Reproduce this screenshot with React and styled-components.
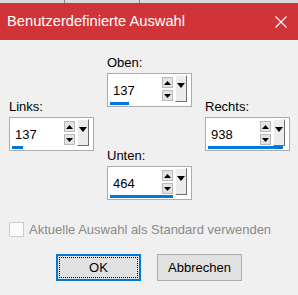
import styled, { createGlobalStyle } from "styled-components"

const GlobalStyle = createGlobalStyle`
  html, body {
    margin: 0;
    padding: 0;
    background: #f0f0f0;
  }
  body {
    font-family: 'Liberation Sans', Arial, sans-serif;
    font-size: 13px;
    color: #000;
  }
`

const Window = styled.div`
  width: 298px;
  height: 295px;
  background: #f0f0f0;
  display: flex;
  flex-direction: column;
  overflow: hidden;
`

const TopStrip = styled.div`
  height: 3px;
  background: #dadada;
  display: flex;
`

const StripTick = styled.span`
  width: 1px;
  background: #8a8a8a;
  margin-left: ${props => props.$gap}px;
`

const TitleBar = styled.div`
  height: 37px;
  background: #d13438;
  color: #fff;
  display: flex;
  align-items: center;
  justify-content: space-between;
  padding: 0 11px 0 7px;
`

const Title = styled.span`
  font-size: 14.7px;
  line-height: 17px;
`

const Fields = styled.div`
  display: grid;
  grid-template-columns: repeat(3, 85px);
  column-gap: 13px;
  padding: 15px 0 0 9px;
`

const Column = styled.div`
  display: flex;
  flex-direction: column;
  gap: 41px;
  padding-top: ${props => props.$offset}px;
`

const Field = styled.div`
  display: flex;
  flex-direction: column;
  gap: 3px;
`

const Label = styled.label`
  line-height: 15px;
  height: 15px;
`

const SpinBox = styled.div`
  box-sizing: border-box;
  width: 85px;
  height: 34px;
  background: #fff;
  border: 1px solid #ababab;
  padding: 1px 4px 1px 1px;
  display: flex;
  flex-direction: column;
`

const SpinRow = styled.div`
  height: 27px;
  display: flex;
`

const Value = styled.span`
  flex: 1;
  padding-left: 4px;
  margin-top: 8px;
  line-height: 15px;
  height: 15px;
`

const Stepper = styled.div`
  display: flex;
  flex-direction: column;
  gap: 2px;
  margin-top: 2px;
`

const StepButton = styled.div`
  box-sizing: border-box;
  width: 11px;
  height: 11px;
  background: #e3e3e3;
  border: 1px solid #b9b9b9;
  display: flex;
  align-items: center;
  justify-content: center;
`

const DropButton = styled.div`
  box-sizing: border-box;
  width: 12px;
  height: 27px;
  margin-left: 2px;
  background: #ececec;
  border-top: 1px solid #fdfdfd;
  border-left: 1px solid #fdfdfd;
  border-right: 1px solid #6e6e6e;
  border-bottom: 1px solid #6e6e6e;
  display: flex;
  justify-content: center;
  padding-top: 7px;
`

const Track = styled.div`
  height: 3px;
  padding-left: 1px;
  display: flex;
`

const Bar = styled.div`
  height: 3px;
  background: #0078d7;
`

const CheckRow = styled.div`
  display: flex;
  align-items: center;
  gap: 5px;
  margin-top: 22px;
  padding-left: 9px;
  color: #8a8a8a;
  line-height: 15px;
`

const CheckBox = styled.span`
  box-sizing: border-box;
  width: 15px;
  height: 15px;
  border: 1px solid #cccccc;
  background: #fbfbfb;
`

const ButtonRow = styled.div`
  display: flex;
  justify-content: center;
  gap: 16px;
  margin-top: 17px;
`

const Button = styled.button`
  box-sizing: border-box;
  width: 85px;
  height: 27px;
  padding: 0;
  font-family: 'Liberation Sans', Arial, sans-serif;
  font-size: 13px;
  color: #000;
  background: #e1e1e1;
  border: ${props => (props.$default ? "2px solid #0078d7" : "1px solid #adadad")};
  outline: ${props => (props.$default ? "1px dotted #000" : "none")};
  outline-offset: -4px;
`

const CloseIcon = () => (
  <svg width="12" height="12" viewBox="0 0 12 12">
    <path d="M0.5 0.5 L11.5 11.5 M11.5 0.5 L0.5 11.5" stroke="#fff" strokeWidth="1.1" />
  </svg>
)

const UpArrow = () => (
  <svg width="7" height="4" viewBox="0 0 7 4">
    <path d="M3.5 0 L7 4 L0 4 Z" fill="#000" />
  </svg>
)

const DownArrow = ({ w = 7, h = 4 }) => (
  <svg width={w} height={h} viewBox={`0 0 ${w} ${h}`}>
    <path d={`M0 0 L${w} 0 L${w / 2} ${h} Z`} fill="#000" />
  </svg>
)

const fields = {
  oben: { label: "Oben:", value: 137, max: 590 },
  links: { label: "Links:", value: 137, max: 1000 },
  rechts: { label: "Rechts:", value: 938, max: 1000 },
  unten: { label: "Unten:", value: 464, max: 590 },
}

const Spin = ({ label, value, max }) => (
  <Field>
    <Label>{label}</Label>
    <SpinBox>
      <SpinRow>
        <Value>{value}</Value>
        <Stepper>
          <StepButton><UpArrow /></StepButton>
          <StepButton><DownArrow /></StepButton>
        </Stepper>
        <DropButton><DownArrow w={8} h={5} /></DropButton>
      </SpinRow>
      <Track>
        <Bar style={{ width: `${Math.round((value / max) * 80)}px` }} />
      </Track>
    </SpinBox>
  </Field>
)

const App = () => {
  return (
    <Window>
      <GlobalStyle />
      <TopStrip>
        <StripTick $gap={64} />
        <StripTick $gap={74} />
      </TopStrip>
      <TitleBar>
        <Title>Benutzerdefinierte Auswahl</Title>
        <CloseIcon />
      </TitleBar>
      <Fields>
        <Column $offset={44}>
          <Spin {...fields.links} />
        </Column>
        <Column $offset={0}>
          <Spin {...fields.oben} />
          <Spin {...fields.unten} />
        </Column>
        <Column $offset={44}>
          <Spin {...fields.rechts} />
        </Column>
      </Fields>
      <CheckRow>
        <CheckBox />
        <span>Aktuelle Auswahl als Standard verwenden</span>
      </CheckRow>
      <ButtonRow>
        <Button $default>OK</Button>
        <Button>Abbrechen</Button>
      </ButtonRow>
    </Window>
  )
}

export default App
